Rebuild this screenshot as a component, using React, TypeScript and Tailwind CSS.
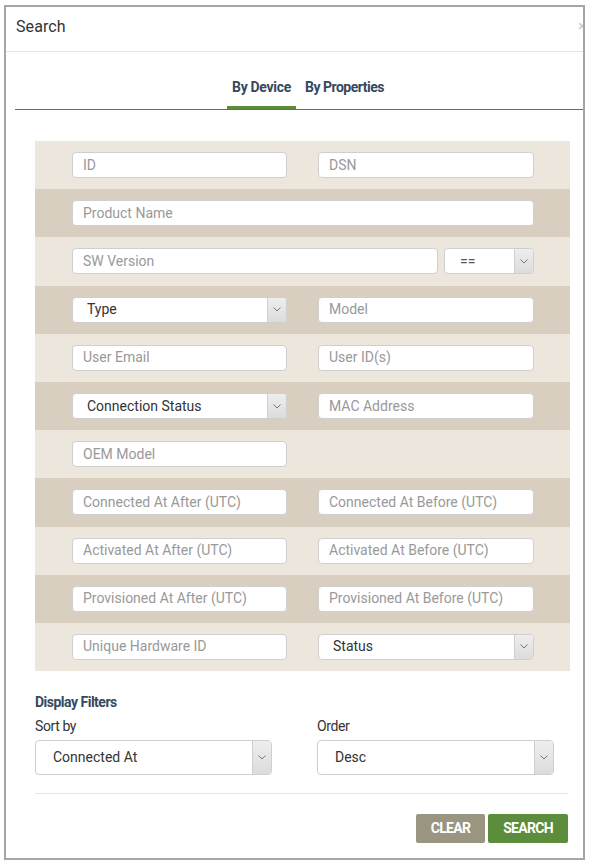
import React from "react";

type Cell =
  | { kind: "input"; label: string; w: string }
  | { kind: "select"; label: string; w: string };

const ROWS: Cell[][] = [
  [
    { kind: "input", label: "ID", w: "w-[215px]" },
    { kind: "input", label: "DSN", w: "w-[216px]" },
  ],
  [{ kind: "input", label: "Product Name", w: "w-[462px]" }],
  [
    { kind: "input", label: "SW Version", w: "w-[366px]" },
    { kind: "select", label: "==", w: "w-[90px]" },
  ],
  [
    { kind: "select", label: "Type", w: "w-[215px]" },
    { kind: "input", label: "Model", w: "w-[216px]" },
  ],
  [
    { kind: "input", label: "User Email", w: "w-[215px]" },
    { kind: "input", label: "User ID(s)", w: "w-[216px]" },
  ],
  [
    { kind: "select", label: "Connection Status", w: "w-[215px]" },
    { kind: "input", label: "MAC Address", w: "w-[216px]" },
  ],
  [{ kind: "input", label: "OEM Model", w: "w-[215px]" }],
  [
    { kind: "input", label: "Connected At After (UTC)", w: "w-[215px]" },
    { kind: "input", label: "Connected At Before (UTC)", w: "w-[216px]" },
  ],
  [
    { kind: "input", label: "Activated At After (UTC)", w: "w-[215px]" },
    { kind: "input", label: "Activated At Before (UTC)", w: "w-[216px]" },
  ],
  [
    { kind: "input", label: "Provisioned At After (UTC)", w: "w-[215px]" },
    { kind: "input", label: "Provisioned At Before (UTC)", w: "w-[216px]" },
  ],
  [
    { kind: "input", label: "Unique Hardware ID", w: "w-[215px]" },
    { kind: "select", label: "Status", w: "w-[216px]" },
  ],
];

function Chevron() {
  return (
    <svg width="8" height="5" viewBox="0 0 8 5" fill="none" stroke="#777" strokeWidth="1">
      <path d="M0.5 0.5 4 4 7.5 0.5" />
    </svg>
  );
}

function SelectBox({ label, className, tall }: { label: string; className: string; tall?: boolean }) {
  return (
    <div
      className={`flex flex-none items-stretch overflow-hidden rounded-[4px] border border-[#cfcfcf] bg-white ${tall ? "h-[35px]" : "h-[26px]"} ${className}`}
    >
      <span
        className={`flex flex-1 items-center text-[14px] ${tall ? "pl-[17px]" : "pl-[14px]"} ${label === "==" ? "pl-[15px] text-[#555]" : "text-[#333]"}`}
      >
        {label}
      </span>
      <span className="flex w-[19px] items-center justify-center border-l border-[#cfcfcf] bg-gradient-to-b from-[#eeeeee] to-[#dcdcdc]">
        <Chevron />
      </span>
    </div>
  );
}

export default function App() {
  return (
    <div className="min-h-[865px] bg-white pl-[4px] pt-[5px] font-['Roboto',sans-serif]">
      <div className="flex h-[855px] w-[581px] flex-col overflow-hidden border-2 border-[#a6a6a6] bg-white">
        <div className="relative flex h-[45px] flex-none items-center border-b border-[#e5e5e5] pb-[5px] pl-[10px]">
          <span className="text-[16px] tracking-[0.1px] text-[#333]">Search</span>
          <span className="absolute right-[-3px] top-[8px] text-[15px] text-[#c8c8c8]">×</span>
        </div>

        <div className="ml-[9px] mt-[25px] flex flex-none items-start border-b border-[#5f6d78] pl-[212px]">
          <span className="border-b-[3px] border-[#5a8c3a] px-[5px] pb-[8px] text-[14px] font-bold tracking-[-0.3px] text-[#34495e]">
            By Device
          </span>
          <span className="ml-[4px] border-b-[3px] border-transparent px-[5px] pb-[8px] text-[14px] font-bold tracking-[-0.5px] text-[#34495e]">
            By Properties
          </span>
        </div>

        <div className="ml-[29px] mt-[31px] w-[535px] flex-none">
          {ROWS.map((row, i) => (
            <div
              key={i}
              className={`flex h-[48.2px] items-center ${row[0].label === "SW Version" ? "gap-[6px]" : "gap-[31px]"} pl-[37px] pr-[36px] ${i % 2 === 0 ? "bg-[#ede6dc]" : "bg-[#d9cfc1]"}`}
            >
              {row.map((c) =>
                c.kind === "input" ? (
                  <div
                    key={c.label}
                    className={`flex h-[26px] flex-none items-center rounded-[4px] border border-[#cfcfcf] bg-white pl-[10px] text-[14px] text-[#999] ${c.w}`}
                  >
                    {c.label}
                  </div>
                ) : (
                  <SelectBox key={c.label} label={c.label} className={c.w} />
                )
              )}
            </div>
          ))}
        </div>

        <div className="ml-[29px] mt-[21px] w-[535px] flex-none">
          <div className="text-[14px] font-bold tracking-[-0.5px] text-[#34495e]">Display Filters</div>
          <div className="mt-[3px] flex gap-[45px]">
            <div className="flex w-[237px] flex-col">
              <span className="text-[14px] tracking-[-0.4px] text-[#333]">Sort by</span>
              <SelectBox label="Connected At" className="mt-[3px] w-[237px]" tall />
            </div>
            <div className="flex w-[237px] flex-col">
              <span className="text-[14px] tracking-[-0.4px] text-[#333]">Order</span>
              <SelectBox label="Desc" className="mt-[3px] w-[237px]" tall />
            </div>
          </div>
          <div className="mt-[18px] h-px w-[533px] bg-[#e5e5e5]" />
          <div className="mt-[20px] flex w-[533px] justify-end gap-[3px]">
            <button className="h-[29px] w-[69px] rounded-[2px] bg-[#9a9580] text-[14px] font-bold tracking-[-0.7px] text-white">
              CLEAR
            </button>
            <button className="h-[29px] w-[80px] rounded-[2px] bg-[#5b8d3c] text-[14px] font-bold tracking-[-0.7px] text-white">
              SEARCH
            </button>
          </div>
        </div>
      </div>
    </div>
  );
}
